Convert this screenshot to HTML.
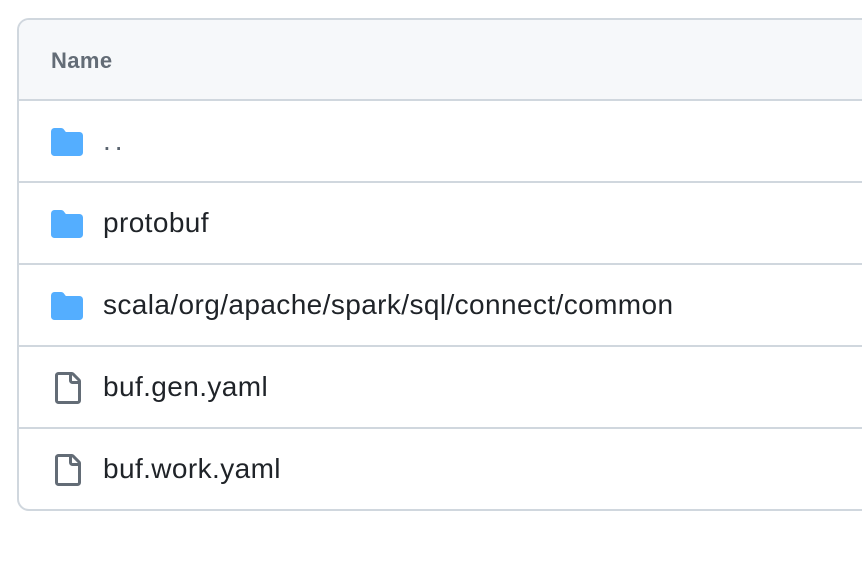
<!DOCTYPE html>
<html><head><style>
body{margin:0;width:862px;height:568px;background:#fff;font-family:"Liberation Sans",sans-serif;overflow:hidden;position:relative}
.box{position:absolute;left:17px;top:18px;width:870px;height:489px;border:2px solid #d0d7de;border-radius:12px;overflow:hidden}
.hd{height:79px;background:#f6f8fa;border-bottom:2px solid #d0d7de;position:relative}
.hd span{position:absolute;left:32px;top:28px;font-size:22px;font-weight:bold;color:#636c76;letter-spacing:0.4px}
.row{height:80px;border-bottom:2px solid #d0d7de;position:relative}
.row:last-child{border-bottom:none}
.row svg{position:absolute;left:32px;top:25px}
.row span{position:absolute;left:84px;top:24px;font-size:28px;color:#1f2328;letter-spacing:0.4px}
</style></head><body>
<div class="box">
<div class="hd"><span>Name</span></div>
<div class="row"><svg width="32" height="32" viewBox="0 0 16 16"><path fill="#54aeff" d="M1.75 1A1.75 1.75 0 0 0 0 2.75v10.5C0 14.216.784 15 1.750 15h12.5A1.75 1.75 0 0 0 16 13.25v-8.5A1.75 1.75 0 0 0 14.25 3H7.5a.25.25 0 0 1-.2-.1l-.9-1.2C6.07 1.26 5.55 1 5 1H1.75Z"/></svg><span style="color:#59636e;letter-spacing:4px">..</span></div>
<div class="row"><svg width="32" height="32" viewBox="0 0 16 16"><path fill="#54aeff" d="M1.75 1A1.75 1.75 0 0 0 0 2.75v10.5C0 14.216.784 15 1.75 15h12.5A1.75 1.75 0 0 0 16 13.25v-8.5A1.75 1.75 0 0 0 14.25 3H7.5a.25.25 0 0 1-.2-.1l-.9-1.2C6.07 1.26 5.55 1 5 1H1.75Z"/></svg><span>protobuf</span></div>
<div class="row"><svg width="32" height="32" viewBox="0 0 16 16"><path fill="#54aeff" d="M1.75 1A1.75 1.75 0 0 0 0 2.75v10.5C0 14.216.784 15 1.75 15h12.5A1.75 1.75 0 0 0 16 13.25v-8.5A1.75 1.75 0 0 0 14.25 3H7.5a.25.25 0 0 1-.2-.1l-.9-1.2C6.07 1.26 5.55 1 5 1H1.75Z"/></svg><span>scala/org/apache/spark/sql/connect/common</span></div>
<div class="row"><svg width="32" height="32" viewBox="0 0 16 16"><path fill="#636c76" d="M2 1.75C2 .784 2.784 0 3.75 0h6.586c.464 0 .909.184 1.237.513l2.914 2.914c.329.328.513.773.513 1.237v9.586A1.75 1.75 0 0 1 13.25 16h-9.5A1.75 1.75 0 0 1 2 14.25Zm1.75-.25a.25.25 0 0 0-.25.25v12.5c0 .138.112.25.25.25h9.5a.25.25 0 0 0 .25-.25V6h-2.75A1.75 1.75 0 0 1 9 4.25V1.5Zm6.75.062V4.25c0 .138.112.25.25.25h2.688l-.011-.013-2.914-2.914-.013-.011Z"/></svg><span>buf.gen.yaml</span></div>
<div class="row"><svg width="32" height="32" viewBox="0 0 16 16"><path fill="#636c76" d="M2 1.75C2 .784 2.784 0 3.75 0h6.586c.464 0 .909.184 1.237.513l2.914 2.914c.329.328.513.773.513 1.237v9.586A1.75 1.75 0 0 1 13.25 16h-9.5A1.75 1.75 0 0 1 2 14.25Zm1.75-.25a.25.25 0 0 0-.25.25v12.5c0 .138.112.25.25.25h9.5a.25.25 0 0 0 .25-.25V6h-2.75A1.75 1.75 0 0 1 9 4.25V1.5Zm6.75.062V4.25c0 .138.112.25.25.25h2.688l-.011-.013-2.914-2.914-.013-.011Z"/></svg><span>buf.work.yaml</span></div>
</div>
</body></html>
